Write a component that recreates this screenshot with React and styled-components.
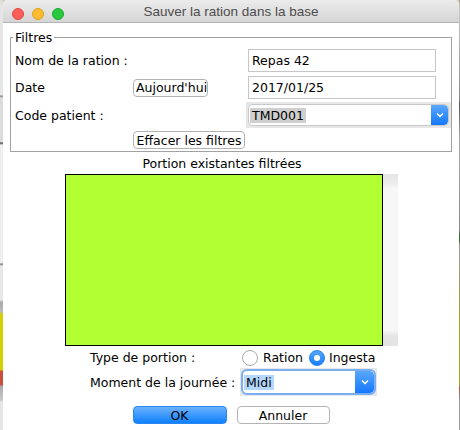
import React from "react";
import styled, { createGlobalStyle } from "styled-components";

const GlobalStyle = createGlobalStyle`
  html, body {
    margin: 0;
    padding: 0;
    width: 460px;
    height: 430px;
    overflow: hidden;
    background: #cfcfcf;
  }
  body {
    font-family: "DejaVu Sans", "Liberation Sans", sans-serif;
    font-size: 12.5px;
    color: #000;
  }
`;

const Chevron = () => (
  <svg width="8" height="6" viewBox="0 0 8 6">
    <path d="M1 1.5 L4 4.5 L7 1.5" fill="none" stroke="#fff" strokeWidth="1.4" />
  </svg>
);

const Desktop = styled.div`
  display: flex;
  width: 460px;
  height: 430px;
`;

const Strip = styled.div`
  flex: none;
  width: ${({ $w }) => $w}px;
  background: ${({ $bg }) => $bg};
`;

const Window = styled.div`
  flex: 1;
  display: flex;
  flex-direction: column;
  background: #fff;
  border-radius: 5px 5px 0 0;
  overflow: hidden;
`;

const TitleBar = styled.div`
  position: relative;
  height: 22px;
  flex: none;
  display: flex;
  align-items: center;
  justify-content: center;
  background: linear-gradient(#ececec, #d5d5d5);
  border-bottom: 1px solid #b4b4b4;
  color: #4d4d4d;
  font-family: "Liberation Sans", Arial, sans-serif;
  font-size: 13.5px;
`;

const Lights = styled.div`
  position: absolute;
  left: 9px;
  top: 8px;
  display: flex;
  gap: 8px;
`;

const Light = styled.span`
  width: 12px;
  height: 12px;
  border-radius: 50%;
  box-sizing: border-box;
  background: ${({ $c }) => $c};
  border: 1px solid ${({ $b }) => $b};
`;

const Content = styled.div`
  display: flex;
  flex-direction: column;
  padding: 0 7px;
`;

const Group = styled.div`
  margin-top: 14px;
  border: 1px solid #a2a2a2;
  padding: 0 1px 0 4px;
`;

const Legend = styled.div`
  width: fit-content;
  margin: -8px 0 0 -2px;
  padding: 0 2px;
  line-height: 15px;
  background: #fff;
`;

const FilterGrid = styled.div`
  margin-top: 2px;
  display: grid;
  grid-template-columns: 118px 113px 1fr;
  grid-template-rows: 27px 27px 28px 22px;
  align-items: center;
`;

const Label = styled.span`
  grid-column: ${({ $col }) => $col || 1};
  white-space: nowrap;
  line-height: 15px;
`;

const Button = styled.button`
  grid-column: ${({ $col }) => $col || "auto"};
  justify-self: start;
  height: ${({ $h }) => $h || 18}px;
  width: ${({ $w }) => ($w ? `${$w}px` : "auto")};
  padding: 0 2px;
  box-sizing: border-box;
  font: inherit;
  color: #000;
  line-height: 15px;
  white-space: nowrap;
  background: #fff;
  border: 1px solid #b3b3b3;
  border-radius: 4px;
`;

const DefaultButton = styled(Button)`
  background: linear-gradient(#6ab2fb, #0f80fe);
  border-color: #2a86f0;
`;

const TextInput = styled.div`
  grid-column: 3;
  justify-self: start;
  margin-left: 2px;
  width: 188px;
  height: 23px;
  box-sizing: border-box;
  padding-left: 3px;
  display: flex;
  align-items: center;
  border: 1px solid #c6c6c6;
`;

const ComboWrap = styled.div`
  grid-column: ${({ $col }) => $col || "auto"};
  justify-self: start;
  width: ${({ $w }) => $w}px;
  height: ${({ $h }) => $h}px;
  box-sizing: border-box;
  padding: 3px;
  display: flex;
  background: #e7e7e7;
`;

const ComboBox = styled.div`
  flex: 1;
  display: flex;
  align-items: center;
  background: #fff;
  border-radius: 4px;
  box-shadow: ${({ $focus }) =>
    $focus ? "0 0 0 2px rgba(84, 155, 250, 0.75)" : "0 0 0 1px #c9c9c9"};
  overflow: hidden;
`;

const ComboText = styled.span`
  flex: 1;
  display: flex;
  align-items: center;
  padding-left: 1px;
`;

const Selected = styled.span`
  padding: 0 2px;
  line-height: 15px;
  background: ${({ $active }) => ($active ? "#b3d7ff" : "#cfcfcf")};
`;

const ComboArrow = styled.span`
  flex: none;
  width: ${({ $w }) => $w}px;
  align-self: stretch;
  display: flex;
  align-items: center;
  justify-content: center;
  background: linear-gradient(#5aa8fb, #1677fd);
  border-radius: 0 4px 4px 0;
`;

const Caption = styled.div`
  margin-top: 4px;
  padding-right: 18px;
  text-align: center;
  line-height: 15px;
`;

const ListRow = styled.div`
  margin-top: 3px;
  display: flex;
  justify-content: center;
`;

const List = styled.div`
  width: 318px;
  height: 172px;
  box-sizing: border-box;
  border: 1px solid #000;
  background: #b2ff33;
`;

const Track = styled.div`
  width: 15px;
  height: 172px;
  background: linear-gradient(
    #e6e6e6 0,
    #ececec 10px,
    #f7f7f7 14px,
    #f7f7f7 156px,
    #e5e5e5 162px,
    #e4e4e4 100%
  );
`;

const FormGrid = styled.div`
  margin-top: 1px;
  padding-left: 80px;
  display: grid;
  grid-template-columns: 150px auto;
  grid-template-rows: 21px 28px;
  align-items: center;
`;

const RadioGroup = styled.div`
  display: flex;
  align-items: center;
  padding-left: 2px;
`;

const Radio = styled.span`
  width: 16px;
  height: 16px;
  box-sizing: border-box;
  border-radius: 50%;
  display: flex;
  align-items: center;
  justify-content: center;
  margin-right: ${({ $gap }) => $gap}px;
  background: ${({ $on }) =>
    $on ? "linear-gradient(#55a6fb, #1b7ffc)" : "#fff"};
  border: 1px solid ${({ $on }) => ($on ? "#1f7ff0" : "#a8a8a8")};
  &::after {
    content: "";
    display: ${({ $on }) => ($on ? "block" : "none")};
    width: 6px;
    height: 6px;
    border-radius: 50%;
    background: #fff;
  }
`;

const RadioText = styled.span`
  margin-right: ${({ $gap }) => $gap || 0}px;
  line-height: 15px;
`;

const Actions = styled.div`
  margin-top: 10px;
  display: flex;
  justify-content: center;
  gap: 10px;
`;

const ActionButton = styled(Button)`
  text-align: center;
`;

const ActionDefault = styled(DefaultButton)`
  text-align: center;
`;

export default function App() {
  return (
    <>
      <GlobalStyle />
      <Desktop>
        <Strip
          $w={3}
          $bg="linear-gradient(#e2dccd 0, #e6e6e6 8px, #e6e6e6 95px, #8a8a8a 96px, #dcdcdc 98px, #dcdcdc 142px, #444 143px, #eee 145px, #eee 263px, #777 264px, #e8e8e8 266px, #e8e8e8 300px, #aaa 302px, #bbb 312px, #d5d000 314px, #d5d000 370px, #c9503a 371px, #c9503a 385px, #aaa 386px, #c8c8c8 400px, #e6e6e6 402px)"
        />
        <Window>
          <TitleBar>
            <Lights>
              <Light $c="#fc5f57" $b="#de4a41" />
              <Light $c="#fdbc2e" $b="#de9f1e" />
              <Light $c="#28c840" $b="#1ca92f" />
            </Lights>
            Sauver la ration dans la base
          </TitleBar>
          <Content>
            <Group>
              <Legend>Filtres</Legend>
              <FilterGrid>
                <Label>Nom de la ration :</Label>
                <TextInput>Repas 42</TextInput>

                <Label>Date</Label>
                <Button $col={2} $w={75}>
                  Aujourd'hui
                </Button>
                <TextInput>2017/01/25</TextInput>

                <Label>Code patient :</Label>
                <ComboWrap $col={3} $w={205} $h={26}>
                  <ComboBox>
                    <ComboText>
                      <Selected>TMD001</Selected>
                    </ComboText>
                    <ComboArrow $w={17}>
                      <Chevron />
                    </ComboArrow>
                  </ComboBox>
                </ComboWrap>

                <Button $col={2} $w={112}>
                  Effacer les filtres
                </Button>
              </FilterGrid>
            </Group>

            <Caption>Portion existantes filtrées</Caption>
            <ListRow>
              <List />
              <Track />
            </ListRow>

            <FormGrid>
              <Label>Type de portion :</Label>
              <RadioGroup>
                <Radio $gap={5} />
                <RadioText $gap={6}>Ration</RadioText>
                <Radio $on $gap={4} />
                <RadioText>Ingesta</RadioText>
              </RadioGroup>

              <Label>Moment de la journée :</Label>
              <ComboWrap $w={137} $h={28}>
                <ComboBox $focus>
                  <ComboText>
                    <Selected $active>Midi</Selected>
                  </ComboText>
                  <ComboArrow $w={19}>
                    <Chevron />
                  </ComboArrow>
                </ComboBox>
              </ComboWrap>
            </FormGrid>

            <Actions>
              <ActionDefault $w={94}>OK</ActionDefault>
              <ActionButton $w={93}>Annuler</ActionButton>
            </Actions>
          </Content>
        </Window>
        <Strip
          $w={1}
          $bg="linear-gradient(#b9a67a 0, #c9c9c9 10px, #888 100px, #555 103px, #aaa 140px, #888 230px, #2d6a2d 235px, #2d6a2d 240px, #999 245px, #a9a030 315px, #a9a030 385px, #b0503a 388px, #999 400px)"
        />
      </Desktop>
    </>
  );
}
